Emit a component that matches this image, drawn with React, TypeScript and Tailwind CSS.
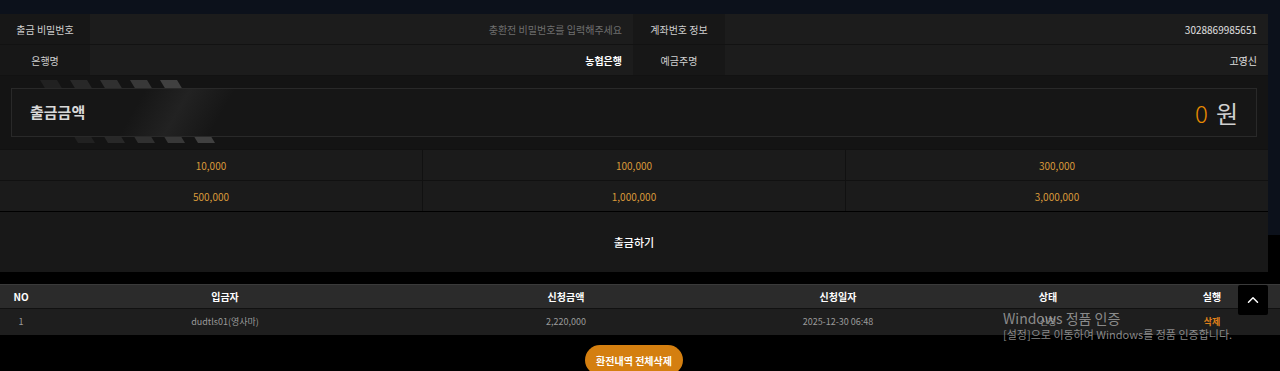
import { ChevronUp } from "lucide-react";

const amounts = ["10,000", "100,000", "300,000", "500,000", "1,000,000", "3,000,000"];

function InfoRow({ label1, value1, label2, value2, v1Class, v2Class }: {
  label1: string; value1: string; label2: string; value2: string; v1Class: string; v2Class: string;
}) {
  return (
    <div className="grid grid-cols-[90px_1fr_92px_1fr] h-[31px] border-b border-[#121212]">
      <div className="flex items-center justify-center bg-[#171717] text-[10px] text-[#cfcfcf]">{label1}</div>
      <div className={`flex items-center justify-end pr-[11px] bg-[#1c1c1c] text-[10px] ${v1Class}`}>{value1}</div>
      <div className="flex items-center justify-center bg-[#171717] text-[10px] text-[#cfcfcf]">{label2}</div>
      <div className={`flex items-center justify-end pr-[11px] bg-[#1c1c1c] text-[10px] ${v2Class}`}>{value2}</div>
    </div>
  );
}

function Stripes() {
  // diagonal stripes peeking out above/below the amount box
  const xs = [40, 70, 100, 130, 160];
  return (
    <svg className="absolute left-0 top-[4px]" width="260" height="63" viewBox="0 0 260 63">
      {xs.map((x, i) => (
        <polygon
          key={x}
          points={`${x},0 ${x + 17},0 ${x + 55},63 ${x + 38},63`}
          fill="#555555"
          opacity={0.2 + i * 0.12}
        />
      ))}
    </svg>
  );
}

export default function App() {
  return (
    <div className="relative w-[1280px] h-[371px] overflow-hidden bg-black font-['Noto_Sans_CJK_KR','Noto_Sans',sans-serif]">
      <div className="flex">
        <div className="w-[1268px]">
          <div className="h-[14px] bg-[#0c111b]" />
          <InfoRow
            label1="출금 비밀번호"
            value1="충환전 비밀번호를 입력해주세요"
            label2="계좌번호 정보"
            value2="3028869985651"
            v1Class="text-[#6f6f6f]"
            v2Class="text-[#e0e0e0]"
          />
          <InfoRow
            label1="은행명"
            value1="농협은행"
            label2="예금주명"
            value2="고영신"
            v1Class="text-white font-bold"
            v2Class="text-[#e0e0e0]"
          />

          {/* 출금금액 */}
          <div className="relative h-[73px] bg-[#141414] px-[11px] pt-[12px]">
            <Stripes />
            <div className="relative flex h-[49px] items-center justify-between border border-[#292929] bg-[#161616] px-[18px] overflow-hidden">
              <div className="absolute left-[120px] top-0 h-full w-[90px] -skew-x-[30deg] bg-gradient-to-r from-transparent via-[#2a2a2a]/60 to-transparent" />
              <span className="relative text-[15px] font-bold text-[#d8d8d8]">출금금액</span>
              <div className="relative flex items-center gap-[8px] text-[24px] leading-none">
                <span className="font-light text-[#e88a00]">0</span>
                <span className="text-[#cfcfcf]">원</span>
              </div>
            </div>
          </div>

          {/* 금액 버튼 */}
          <div className="grid grid-cols-3 gap-px bg-[#111111] pt-px">
            {amounts.map((a) => (
              <div key={a} className="flex h-[30px] items-center justify-center bg-[#1b1b1b] text-[10px] text-[#d9993a]">
                {a}
              </div>
            ))}
          </div>

          <div className="mt-px flex h-[60px] items-center justify-center bg-[#181818] text-[11px] font-medium text-white">
            출금하기
          </div>
        </div>
        <div className="w-[12px] h-[235px] bg-[#0c111b]" />
      </div>

      {/* 환전 내역 */}
      <div className="mt-[12px]">
        <div className="grid grid-cols-[42px_366px_316px_228px_192px_1fr] h-[24px] items-center bg-[#2b2b2b] border-t border-[#3a3a3a] text-[10px] font-bold text-white">
          <div className="text-center">NO</div>
          <div className="text-center">입금자</div>
          <div className="text-center">신청금액</div>
          <div className="text-center">신청일자</div>
          <div className="text-center">상태</div>
          <div className="text-center">실행</div>
        </div>
        <div className="grid grid-cols-[42px_366px_316px_228px_192px_1fr] h-[27px] items-center bg-[#1e1e1e] border-t border-[#111] text-[9px] text-[#9a9a9a]">
          <div className="text-center">1</div>
          <div className="text-center">dudtls01(영사마)</div>
          <div className="text-center">2,220,000</div>
          <div className="text-center">2025-12-30 06:48</div>
          <div className="text-center">신청</div>
          <div className="text-center font-bold text-[#e0801a]">삭제</div>
        </div>
        <div className="flex w-[1268px] justify-center pt-[10px]">
          <button className="h-[30px] rounded-full bg-[#d47f10] px-[11px] text-[10px] font-bold text-white">
            환전내역 전체삭제
          </button>
        </div>
      </div>

      {/* scroll-to-top */}
      <div className="absolute left-[1238px] top-[285px] flex h-[30px] w-[30px] items-center justify-center rounded-[2px] bg-black">
        <ChevronUp className="h-[18px] w-[18px] text-white" strokeWidth={2} />
      </div>

      {/* Windows activation watermark */}
      <div className="pointer-events-none absolute left-[1003px] top-[310px] leading-tight text-[#a8a8a8]/80">
        <div className="text-[14px]">Windows 정품 인증</div>
        <div className="text-[11px]">[설정]으로 이동하여 Windows를 정품 인증합니다.</div>
      </div>
    </div>
  );
}
